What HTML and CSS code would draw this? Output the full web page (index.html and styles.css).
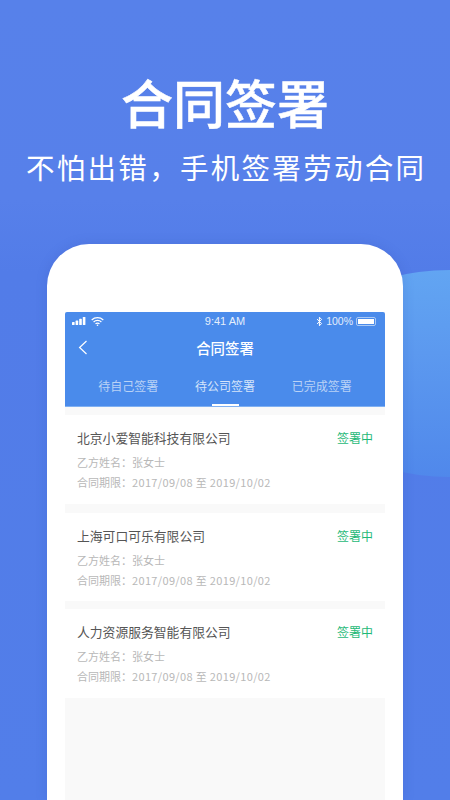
FILE: index.html
```html
<!DOCTYPE html>
<html lang="zh">
<head>
<meta charset="utf-8">
<title>合同签署</title>
<link rel="stylesheet" href="styles.css">
</head>
<body>
<div class="page">
  <div class="blob"></div>
  <h1 class="title">合同签署</h1>
  <p class="subtitle">不怕出错，手机签署劳动合同</p>
  <div class="phone">
    <div class="screen">
      <header class="head">
        <div class="status">
          <div class="status-left">
            <svg class="signal" width="15" height="8" viewBox="0 0 15 8"><rect x="0" y="5" width="2.6" height="3" rx=".6"/><rect x="3.6" y="3.6" width="2.6" height="4.4" rx=".6"/><rect x="7.2" y="1.8" width="2.6" height="6.2" rx=".6"/><rect x="10.8" y="0" width="2.6" height="8" rx=".6" /></svg>
            <svg class="wifi" width="13" height="9" viewBox="0 0 13 9"><path d="M.7 3a8.4 8.4 0 0 1 11.6 0M2.6 5a5.6 5.6 0 0 1 7.8 0M4.5 6.9a2.8 2.8 0 0 1 4 0" fill="none" stroke="#fff" stroke-width="1.2"/><circle cx="6.5" cy="8.2" r=".8" fill="#fff"/></svg>
          </div>
          <span class="time">9:41 AM</span>
          <div class="status-right">
            <svg class="bt" width="7" height="11" viewBox="0 0 7 10"><path d="M1 2.6 5.6 7 3.4 9.3V.7L5.6 3 1 7.4" fill="none" stroke="#fff" stroke-width="1"/></svg>
            <span class="pct">100%</span>
            <span class="battery"><span class="battery-fill"></span></span>
          </div>
        </div>
        <div class="nav">
          <svg class="back" width="10" height="15" viewBox="0 0 10 15"><path d="M8.5 1 1.6 7.5l6.9 6.5" fill="none" stroke="#fff" stroke-width="1.2"/></svg>
          <span class="nav-title">合同签署</span>
        </div>
        <div class="tabs">
          <span class="tab">待自己签署</span>
          <span class="tab active">待公司签署</span>
          <span class="tab">已完成签署</span>
        </div>
      </header>
      <div class="list">
        <article class="card c1">
          <div class="row"><span class="name">北京小爱智能科技有限公司</span><span class="state">签署中</span></div>
          <p class="meta">乙方姓名：张女士</p>
          <p class="meta">合同期限：<span class="date">2017/09/08 至 2019/10/02</span></p>
        </article>
        <article class="card c2">
          <div class="row"><span class="name">上海可口可乐有限公司</span><span class="state">签署中</span></div>
          <p class="meta">乙方姓名：张女士</p>
          <p class="meta">合同期限：<span class="date">2017/09/08 至 2019/10/02</span></p>
        </article>
        <article class="card c3">
          <div class="row"><span class="name">人力资源服务智能有限公司</span><span class="state">签署中</span></div>
          <p class="meta">乙方姓名：张女士</p>
          <p class="meta">合同期限：<span class="date">2017/09/08 至 2019/10/02</span></p>
        </article>
      </div>
    </div>
  </div>
</div>
</body>
</html>
```
FILE: styles.css
```css
* { box-sizing: border-box; margin: 0; padding: 0; }
html, body { width: 450px; height: 800px; overflow: hidden; }
body { font-family: "Noto Sans CJK SC", "Noto Sans", sans-serif; }
.page {
  position: relative;
  width: 450px;
  height: 800px;
  overflow: hidden;
  background: linear-gradient(180deg, #5781ea 0%, #5780ea 25%, #527ce8 34%, #527ee9 100%);
  display: flex;
  flex-direction: column;
  align-items: center;
  padding-top: 65px;
  color: #fff;
}
.blob {
  position: absolute;
  left: 290px;
  top: 270px;
  width: 320px;
  height: 207px;
  border-radius: 50%;
  background: linear-gradient(180deg, #62a5f2 0%, #5c99ef 40%, #5088eb 100%);
}
.title {
  position: relative;
  font-size: 52px;
  line-height: 74px;
  font-weight: 500;
  -webkit-text-stroke: .5px #fff;
  letter-spacing: 0;
}
.subtitle {
  position: relative;
  margin-top: 8px;
  font-size: 28.5px;
  line-height: 40px;
  letter-spacing: 2.3px;
  margin-right: -2.3px;
  font-weight: 400;
}
.phone {
  position: relative;
  margin-top: 57px;
  width: 356px;
  height: 560px;
  background: #fff;
  border-radius: 42px 42px 0 0;
  padding: 68px 18px 0;
  box-shadow: 0 0 12px rgba(50, 70, 170, .18);
}
.screen { height: 100%; background: #f9f9f9; }
.head {
  height: 95px;
  background: #4a8beb;
  border-radius: 2px 2px 0 0;
  border-bottom: 1px solid #7fb0f2;
}
.status {
  height: 18px;
  padding: 0 9px 0 7px;
  display: flex;
  align-items: center;
  justify-content: space-between;
  position: relative;
  font-family: "Liberation Sans", sans-serif;
  font-size: 11px;
  color: #e4eefc;
}
.status-left { display: flex; align-items: center; gap: 4px; }
.status-right { display: flex; align-items: center; gap: 3px; }
.signal { fill: #fff; }
.pct { font-size: 10.5px; }
.time { position: absolute; left: 0; right: 0; text-align: center; top: 3px; }
.battery {
  display: block;
  width: 20px;
  height: 9px;
  border: 1px solid #a9c9f5;
  border-radius: 2px;
  padding: 1px;
}
.battery-fill { display: block; height: 100%; background: #fff; }
.nav {
  height: 35px;
  display: flex;
  align-items: center;
  justify-content: center;
  position: relative;
}
.back { position: absolute; left: 13px; top: 10px; }
.nav-title { font-size: 14.4px; color: #fff; font-weight: 500; }
.tabs { display: flex; height: 41px; padding: 0 15px; }
.tab {
  flex: 1;
  text-align: center;
  font-size: 12px;
  line-height: 18px;
  padding-top: 12px;
  color: #b9d2f6;
  position: relative;
}
.tab.active { color: #d5e4fa; }
.tab.active::after {
  content: "";
  position: absolute;
  left: 50%;
  bottom: 0;
  width: 27px;
  height: 2px;
  margin-left: -13.5px;
  background: #fff;
}
.list { padding-top: 8px; }
.card {
  background: #fff;
  padding: 14px 12px 0;
  height: 89px;
  margin-bottom: 9px;
}
.c2 { height: 88px; margin-bottom: 8px; }
.c3 { margin-bottom: 0; }
.row { display: flex; justify-content: space-between; line-height: 18px; }
.name { font-size: 12.8px; color: #555; }
.state { font-size: 12px; color: #1fb978; }
.meta { font-size: 11px; line-height: 20px; color: #b8b8b8; }
.row + .meta { margin-top: 5px; }
.date { letter-spacing: .34px; }
```
